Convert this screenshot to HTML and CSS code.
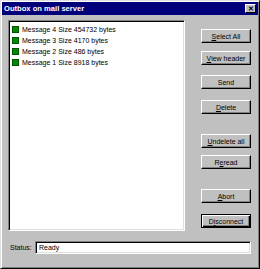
FILE: index.html
```html
<!DOCTYPE html>
<html lang="en">
	<head>
		<meta charset="UTF-8" />
		<title>Outbox on mail server</title>
		<link rel="stylesheet" href="styles.css">
	</head>
	<body>
		<div class="window">
			<div class="titlebar">
				<span class="title">Outbox on mail server</span>
				<span class="close">&#x2715;</span>
			</div>
			<div class="content">
				<div class="list">
					<div class="item"><i class="mark"></i>Message 4 Size 454732 bytes</div>
					<div class="item"><i class="mark"></i>Message 3 Size 4170 bytes</div>
					<div class="item"><i class="mark"></i>Message 2 Size 486 bytes</div>
					<div class="item"><i class="mark"></i>Message 1 Size 8918 bytes</div>
				</div>
				<div class="buttons">
					<button class="b-select"><u>S</u>elect All</button>
					<button class="b-view"><u>V</u>iew header</button>
					<button class="b-send">Send</button>
					<button class="b-delete"><u>D</u>elete</button>
					<button class="b-undelete"><u>U</u>ndelete all</button>
					<button class="b-reread">R<u>e</u>read</button>
					<button class="b-abort"><u>A</u>bort</button>
					<button class="b-disconnect default">D<u>i</u>sconnect</button>
				</div>
			</div>
			<div class="status">
				<span class="label">Status:</span>
				<div class="field">Ready</div>
			</div>
		</div>
	</body>
</html>
```

FILE: styles.css
```css
body {
	margin: 0;
	background: #c0c0c0;
	font-family: "Liberation Sans", Arial, sans-serif;
	font-size: 7px;
	color: #000;
}
.window {
	width: 260px;
	height: 269px;
	box-sizing: border-box;
	background: #c0c0c0;
	border: 1px solid;
	border-color: #dfdfdf #000 #000 #dfdfdf;
	box-shadow: inset 1px 1px 0 #fff, inset -1px -1px 0 #808080;
	padding: 1px;
	display: flex;
	flex-direction: column;
}
.titlebar {
	height: 13px;
	background: #00007b;
	display: flex;
	align-items: center;
	justify-content: space-between;
	padding: 0 2px 0 2px;
}
.title {
	color: #fff;
	font-weight: bold;
	font-size: 7.6px;
}
.close {
	width: 11px;
	height: 9px;
	box-sizing: border-box;
	background: #c0c0c0;
	border: 1px solid;
	border-color: #fff #000 #000 #fff;
	font-size: 7px;
	font-weight: bold;
	line-height: 7px;
	text-align: center;
}
.content {
	display: flex;
	margin: 5px 0 0 6px;
}
.list {
	width: 177px;
	height: 211px;
	box-sizing: border-box;
	background: #fff;
	border: 1px solid;
	border-color: #808080 #fff #fff #808080;
	box-shadow: inset 1px 1px 0 #000, inset -1px -1px 0 #dfdfdf;
	padding: 3px 3px;
}
.item {
	height: 11px;
	display: flex;
	align-items: center;
	white-space: nowrap;
}
.mark {
	width: 7px;
	height: 7px;
	box-sizing: border-box;
	background: #008a00;
	border: 1px solid #005200;
	margin-right: 3px;
}
.buttons {
	display: flex;
	flex-direction: column;
	margin-left: 16px;
}
button {
	width: 50px;
	height: 14px;
	padding: 0;
	background: #c0c0c0;
	border: 1px solid;
	border-color: #fff #000 #000 #fff;
	box-shadow: inset -1px -1px 0 #808080;
	font-family: "Liberation Sans", Arial, sans-serif;
	font-size: 7px;
	color: #000;
}
button.default {
	border: 1px solid #000;
	box-shadow: inset 1px 1px 0 #fff, inset -1px -1px 0 #000, inset -2px -2px 0 #808080;
}
.b-select { margin-top: 9px; }
.b-view { margin-top: 8px; }
.b-send { margin-top: 10px; }
.b-delete { margin-top: 11px; }
.b-undelete { margin-top: 20px; }
.b-reread { margin-top: 7px; }
.b-abort { margin-top: 20px; }
.b-disconnect { margin-top: 11px; }
.status {
	display: flex;
	align-items: center;
	margin: 10px 0 0 8px;
}
.label {
	width: 25px;
}
.field {
	width: 216px;
	height: 13px;
	box-sizing: border-box;
	background: #fff;
	border: 1px solid;
	border-color: #808080 #fff #fff #808080;
	box-shadow: inset 1px 1px 0 #000, inset -1px -1px 0 #dfdfdf;
	padding: 0 3px;
	line-height: 11px;
}
```
